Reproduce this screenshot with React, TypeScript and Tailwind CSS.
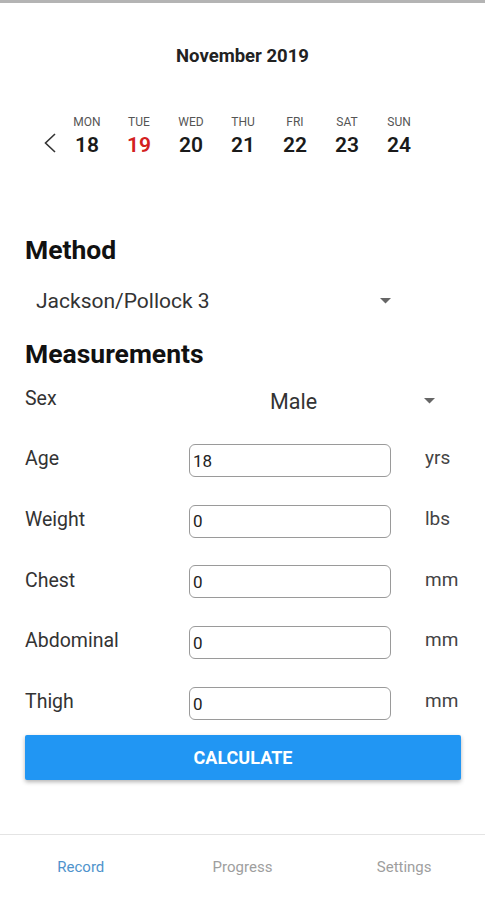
import React from "react";

const days = [
  { d: "MON", n: "18" },
  { d: "TUE", n: "19", red: true },
  { d: "WED", n: "20" },
  { d: "THU", n: "21" },
  { d: "FRI", n: "22" },
  { d: "SAT", n: "23" },
  { d: "SUN", n: "24" },
];

const rows = [
  { label: "Age", value: "18", unit: "yrs" },
  { label: "Weight", value: "0", unit: "lbs" },
  { label: "Chest", value: "0", unit: "mm" },
  { label: "Abdominal", value: "0", unit: "mm" },
  { label: "Thigh", value: "0", unit: "mm" },
];

function Caret() {
  return (
    <svg width="11" height="6" viewBox="0 0 11 6">
      <path d="M0 0 L11 0 L5.5 5.5 Z" fill="#666" />
    </svg>
  );
}

export default function App() {
  return (
    <div
      className="w-[485px] h-[900px] bg-white flex flex-col border-t-[3px] border-[#b4b4b4] overflow-hidden"
      style={{ fontFamily: "Roboto, 'Liberation Sans', sans-serif" }}
    >
      <div className="pt-[43px] text-center text-[18.5px] leading-[20px] font-bold text-[#222]">
        November 2019
      </div>

      <div className="mt-[50px] flex items-center">
        <div className="w-[61px] flex justify-end pr-[5px]">
          <svg width="12" height="20" viewBox="0 0 12 20" className="mt-[12px]">
            <path d="M11 1 L1.5 10 L11 19" fill="none" stroke="#333" strokeWidth="1.6" />
          </svg>
        </div>
        {days.map((x) => (
          <div key={x.d} className="w-[52px] flex flex-col items-center">
            <div className="text-[12px] leading-[13px] text-[#555]">{x.d}</div>
            <div
              className={
                "mt-[4px] text-[21px] leading-[24px] font-semibold " +
                (x.red ? "text-[#d32020]" : "text-[#1a1a1a]")
              }
            >
              {x.n}
            </div>
          </div>
        ))}
      </div>

      <div className="px-[25px]">
        <div className="mt-[79px] text-[26.5px] leading-[28px] font-bold text-[#111]">Method</div>
        <div className="mt-[25px] flex items-center w-[366px] pl-[11px]">
          <span className="text-[21px] leading-[24px] text-[#333] flex-1">Jackson/Pollock 3</span>
          <Caret />
        </div>
        <div className="mt-[27px] text-[26.5px] leading-[28px] font-bold text-[#111]">Measurements</div>

        <div className="mt-[16px] h-[34px] flex items-center">
          <span className="w-[245px] text-[19.5px] text-[#333] -mt-[4px]">Sex</span>
          <span className="flex-1 text-[21.5px] text-[#333] mt-[2px]">Male</span>
          <span className="mr-[25px]">
            <Caret />
          </span>
        </div>

        <div className="mt-[26px] flex flex-col gap-[27.7px]">
          {rows.map((r) => (
            <div key={r.label} className="h-[33px] flex items-center">
              <span className="w-[164px] text-[19.5px] text-[#333] -mt-[3px]">{r.label}</span>
              <div className="w-[202px] h-[33px] rounded-[6px] border border-[#9a9a9a] flex items-center pl-[3px] pt-[2px]">
                <span className="text-[17px] text-[#222]">{r.value}</span>
              </div>
              <span className="ml-[34px] text-[19px] text-[#444] -mt-[4px]">{r.unit}</span>
            </div>
          ))}
        </div>

        <button className="mt-[15px] w-[436px] h-[45px] bg-[#2196f3] rounded-[2px] text-white text-[18px] font-bold shadow-[0_2px_4px_rgba(0,0,0,0.3)] flex items-center justify-center">
          CALCULATE
        </button>
      </div>

      <div className="mt-auto h-[66px] border-t-[1.5px] border-[#e4e4e4] grid grid-cols-3 items-center text-[15px]">
        <div className="text-center text-[#4f93cc]">Record</div>
        <div className="text-center text-[#9e9e9e]">Progress</div>
        <div className="text-center text-[#9e9e9e]">Settings</div>
      </div>
    </div>
  );
}
